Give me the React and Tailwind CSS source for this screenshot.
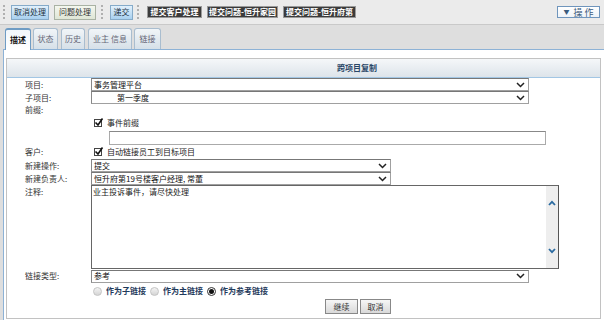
import React from "react";

const F = "font-['Noto_Sans_CJK_SC','Noto_Sans',sans-serif]";

function Chev({ color = "#222" }) {
  return (
    <svg width="9" height="6" viewBox="0 0 9 6">
      <path d="M1 1l3.5 3.5L8 1" fill="none" stroke={color} strokeWidth="1.5" />
    </svg>
  );
}

function Sel({ className, text, indent }) {
  return (
    <div
      className={`h-[13px] border border-[#a0a0a0] border-t-[#777] border-l-[#888] bg-white flex items-center justify-between pr-[3px] ${className}`}
    >
      <span className={`text-[8px] leading-none text-[#111] ${indent ? "pl-[25px]" : "pl-[2px]"}`}>{text}</span>
      <Chev />
    </div>
  );
}

function Check() {
  return (
    <div className="relative w-[8px] h-[8px] border border-[#444] bg-white">
      <svg className="absolute left-[-1px] top-[-3px]" width="10" height="10" viewBox="0 0 10 10">
        <path d="M1.5 5.5l2.5 2.5L8.5 1.5" fill="none" stroke="#111" strokeWidth="1.6" />
      </svg>
    </div>
  );
}

function Radio({ on }) {
  return on ? (
    <div className="w-[9px] h-[9px] rounded-full border border-[#333] bg-white flex items-center justify-center">
      <div className="w-[5px] h-[5px] rounded-full bg-[#111]" />
    </div>
  ) : (
    <div className="w-[9px] h-[9px] rounded-full border border-[#c4c4c4] bg-gradient-to-b from-[#f4f4f4] to-[#d4d4d4]" />
  );
}

function Grip({ className }) {
  return <div className={`h-[14px] w-[3px] border-l-2 border-dotted border-[#b0b0b0] ${className}`} />;
}

function Label({ children, className = "" }) {
  return <div className={`w-[84px] pl-[18px] text-[8px] leading-none text-[#333] shrink-0 ${className}`}>{children}</div>;
}

export default function App() {
  return (
    <div className={`w-[604px] h-[320px] overflow-hidden bg-[#dedede] ${F}`}>
      {/* toolbar */}
      <div className="h-[25px] bg-[#ebebeb] border-b border-[#c9c9c9] flex items-center">
        <Grip className="ml-[3px]" />
        <div className="ml-[5px] w-[38px] h-[15px] border border-[#86abc9] bg-gradient-to-b from-[#e2f1fc] to-[#a8d0ef] flex items-center justify-center text-[8px] leading-none text-[#234]">取消处理</div>
        <div className="ml-[5px] w-[42px] h-[15px] border border-[#a9b2a4] bg-gradient-to-b from-[#f4f7ef] to-[#dfe6d6] flex items-center justify-center text-[8px] leading-none text-[#333]">问题处理</div>
        <Grip className="ml-[5px]" />
        <div className="ml-[6px] w-[23px] h-[15px] border border-[#86abc9] bg-gradient-to-b from-[#e2f1fc] to-[#a8d0ef] flex items-center justify-center text-[8px] leading-none text-[#234]">递交</div>
        <Grip className="ml-[4px]" />
        <div className="ml-[7px] w-[55px] h-[12px] border border-[#9a9a9a] bg-[#3b3b3b] flex items-center justify-center text-[8px] leading-none font-bold text-white">提交客户处理</div>
        <div className="ml-[5px] w-[71px] h-[12px] border border-[#9a9a9a] bg-[#3b3b3b] flex items-center justify-center text-[8px] leading-none font-bold text-white">提交问题-恒升家园</div>
        <div className="ml-[5px] w-[73px] h-[12px] border border-[#9a9a9a] bg-[#3b3b3b] flex items-center justify-center text-[8px] leading-none font-bold text-white">提交问题-恒升府第</div>
        <div className="ml-auto mr-[4px] w-[43px] h-[12px] border border-[#6f95bc] bg-gradient-to-b from-white to-[#eef3f8] flex items-center justify-center gap-[4px] text-[9px] leading-none text-[#3b5b7d]">
          <span className="text-[6px]">▼</span>
          <span>操 作</span>
        </div>
      </div>

      {/* tabs */}
      <div className="h-[24px] flex items-end pl-[5px]">
        <div className="w-[26px] h-[22px] rounded-t-[3px] border border-b-0 border-[#6f9cc4] border-t-2 bg-gradient-to-b from-[#f2f7fb] to-white flex items-center justify-center text-[8px] leading-none font-bold text-[#111] relative z-10 mb-[-1px]">描述</div>
        <div className="ml-[2px] w-[25px] h-[21px] rounded-t-[3px] border border-b-0 border-[#a9bdcf] bg-gradient-to-b from-[#f1f5f8] to-[#d6e0e8] flex items-center justify-center text-[8px] leading-none text-[#667]">状态</div>
        <div className="ml-[3px] w-[24px] h-[21px] rounded-t-[3px] border border-b-0 border-[#a9bdcf] bg-gradient-to-b from-[#f1f5f8] to-[#d6e0e8] flex items-center justify-center text-[8px] leading-none text-[#667]">历史</div>
        <div className="ml-[3px] w-[44px] h-[21px] rounded-t-[3px] border border-b-0 border-[#a9bdcf] bg-gradient-to-b from-[#f1f5f8] to-[#d6e0e8] flex items-center justify-center text-[8px] leading-none text-[#667]">业主 信息</div>
        <div className="ml-[2px] w-[27px] h-[21px] rounded-t-[3px] border border-b-0 border-[#a9bdcf] bg-gradient-to-b from-[#f1f5f8] to-[#d6e0e8] flex items-center justify-center text-[8px] leading-none text-[#667]">链接</div>
      </div>

      {/* panel */}
      <div className="ml-[3px] w-[601px] h-[271px] border-l border-t border-[#8db2d6] bg-white pt-[8px] pl-[2px]">
        <div className="w-[595px] h-[261px] border border-[#c2c2c2]">
          <div className="h-[19px] border-b border-[#a2c6e4] bg-gradient-to-b from-[#f5f7f9] to-[#dde4ea] flex items-center pl-[330px] text-[8px] leading-none font-bold text-[#2a4767]">
            跨项目复制
          </div>

          <div className="flex items-center h-[13px]">
            <Label>项目:</Label>
            <Sel className="w-[438px]" text="事务管理平台" />
          </div>
          <div className="flex items-center h-[13px]">
            <Label>子项目:</Label>
            <Sel className="w-[438px]" text="第一季度" indent />
          </div>
          <div className="flex items-center h-[12px]">
            <Label>前缀:</Label>
          </div>
          <div className="flex items-center h-[13px]">
            <Label />
            <div className="ml-[3px] flex items-center gap-[5px]">
              <Check />
              <span className="text-[8px] leading-none text-[#222]">事件前缀</span>
            </div>
          </div>
          <div className="flex items-center h-[15px] mt-[1px]">
            <Label />
            <div className="ml-[18px] w-[437px] h-[14px] border border-[#aaa] border-t-[#888] bg-white" />
          </div>
          <div className="flex items-center h-[14px]">
            <Label>客户:</Label>
            <div className="ml-[3px] flex items-center gap-[5px]">
              <Check />
              <span className="text-[8px] leading-none text-[#222]">自动链接员工到目标项目</span>
            </div>
          </div>
          <div className="flex items-center h-[13px]">
            <Label>新建操作:</Label>
            <Sel className="w-[300px]" text="提交" />
          </div>
          <div className="flex items-center h-[13px]">
            <Label>新建负责人:</Label>
            <Sel className="w-[300px]" text="恒升府第19号楼客户经理, 常董" />
          </div>
          <div className="flex items-start h-[84px]">
            <Label className="pt-[3px]">注释:</Label>
            <div className="w-[468px] h-[84px] border border-[#666] border-r-[#555] bg-white flex">
              <div className="flex-1 pl-[1px] pt-[2px] text-[8px] leading-none text-[#222]">业主投诉事件，请尽快处理</div>
              <div className="w-[12px] bg-[#eeeeee] flex flex-col items-center justify-between pt-[14px] pb-[14px]">
                <svg width="8" height="6" viewBox="0 0 8 6"><path d="M1 5l3-3.2L7 5" fill="none" stroke="#2a6aa0" strokeWidth="1.8" /></svg>
                <svg width="8" height="6" viewBox="0 0 8 6"><path d="M1 1l3 3.2L7 1" fill="none" stroke="#2a6aa0" strokeWidth="1.8" /></svg>
              </div>
            </div>
          </div>
          <div className="flex items-center h-[14px]">
            <Label>链接类型:</Label>
            <Sel className="w-[438px]" text="参考" />
          </div>
          <div className="flex items-center h-[16px]">
            <Label />
            <div className="ml-[2px] flex items-center text-[8px] leading-none font-bold text-[#1f3a5c]">
              <Radio />
              <span className="ml-[4px]">作为子链接</span>
              <span className="ml-[4px]"><Radio /></span>
              <span className="ml-[4px]">作为主链接</span>
              <span className="ml-[4px]"><Radio on /></span>
              <span className="ml-[4px]">作为参考链接</span>
            </div>
          </div>
          <div className="flex items-center pl-[318px] gap-[2px]">
            <div className="w-[33px] h-[15px] border border-[#888] bg-gradient-to-b from-[#f6f6f6] to-[#d9d9d9] flex items-center justify-center text-[8px] leading-none text-[#333]">继续</div>
            <div className="w-[31px] h-[15px] border border-[#888] bg-gradient-to-b from-[#f6f6f6] to-[#d9d9d9] flex items-center justify-center text-[8px] leading-none text-[#333]">取消</div>
          </div>
        </div>
      </div>
    </div>
  );
}
